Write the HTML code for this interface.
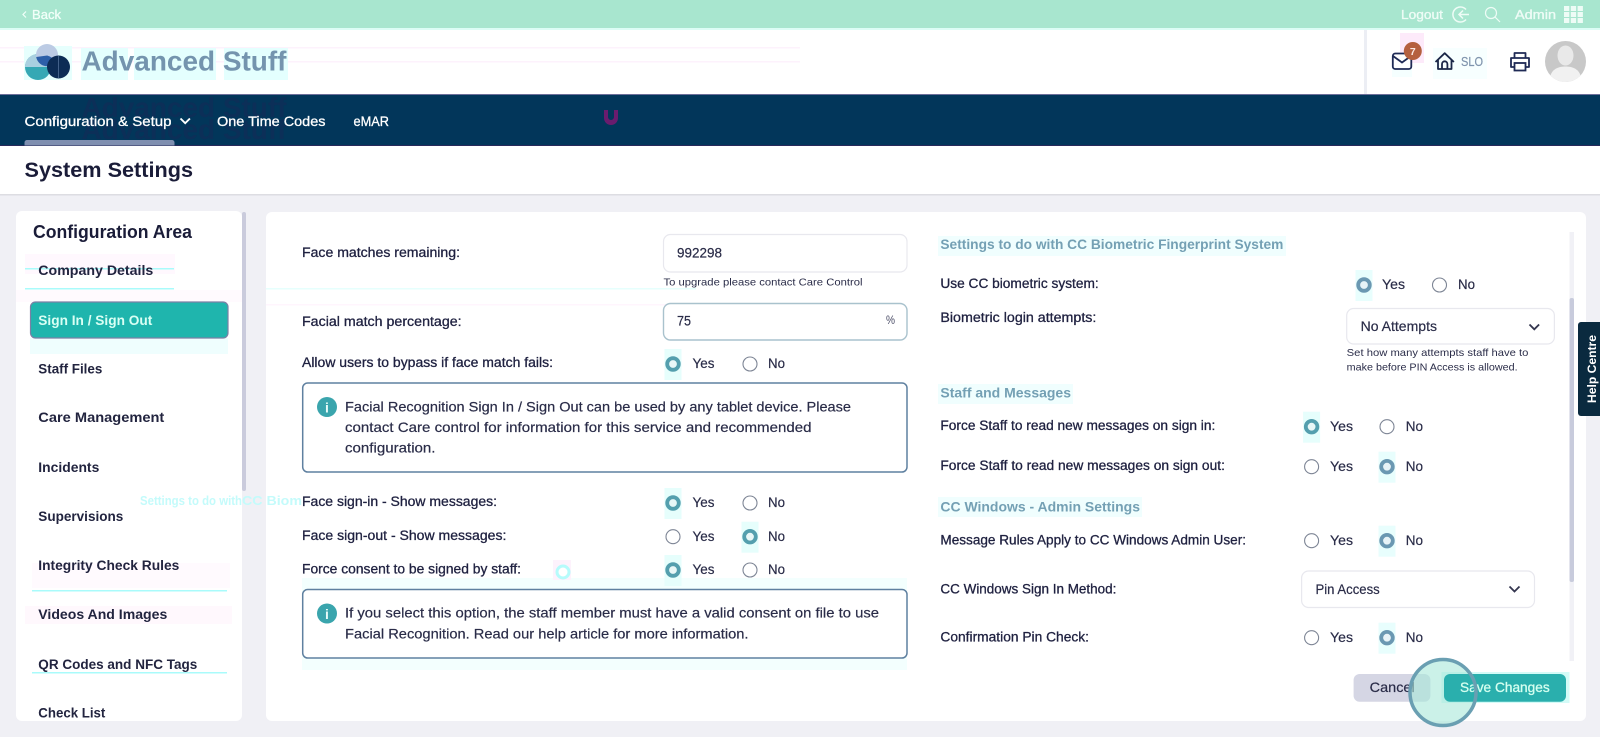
<!DOCTYPE html>
<html lang="en"><head><meta charset="utf-8"><title>System Settings</title>
<style>
html,body{margin:0;padding:0;width:1600px;height:737px;overflow:hidden;background:#f0f0f5}
svg{display:block}
text{font-family:"Liberation Sans",sans-serif;white-space:pre}
.l{font-size:13.5px;fill:#1f2140;stroke:#1f2140;stroke-width:.3}
.r{font-size:14px;fill:#2a2c48;stroke:#2a2c48;stroke-width:.2}
.s{font-size:10.5px;fill:#2a2c48}
.m{font-size:13.5px;font-weight:bold;fill:#22243f}
.h{font-size:14px;font-weight:bold;fill:#74a0b4}
.n{font-size:14px;fill:#fff;stroke:#fff;stroke-width:.3}
.g{fill:#c4fbfb;font-size:13px;font-weight:bold}
</style></head><body>
<svg width="1600" height="737" viewBox="0 0 1600 737" xmlns="http://www.w3.org/2000/svg">
<defs>
<g id="off"><circle r="7" fill="#fff" stroke="#7d8595" stroke-width="1.100"/></g>
<g id="on"><rect x="-8.500" y="-15" width="17" height="31" fill="#e6fefc"/><circle r="5.800" fill="#e8f7f7" stroke="#549fae" stroke-width="3.800"/></g>
<g id="on2"><rect x="-8.500" y="-15" width="17" height="31" fill="#e8fefd"/><circle r="5.800" fill="#e8f3f7" stroke="#6b98b2" stroke-width="3.800"/></g>
</defs>
<rect width="1600" height="737" fill="#f0f0f5"/>

<!-- top bar -->
<rect width="1600" height="28" fill="#a8e6cf"/>
<rect y="28" width="1600" height="2" fill="#dcfdf6"/>
<path d="M26 11.500l-3 3 3 3" fill="none" stroke="#f2fff9" stroke-width="1.200"/>
<text x="32" y="19" font-size="12.500" fill="#f2fff9" stroke="#f2fff9" stroke-width=".3" textLength="29" lengthAdjust="spacingAndGlyphs">Back</text>
<text x="1401" y="19" font-size="13" fill="#eefcf6" stroke="#eefcf6" stroke-width=".35" textLength="42" lengthAdjust="spacingAndGlyphs">Logout</text>
<path d="M1466 9.500a7.500 7.500 0 1 0 0 10" fill="none" stroke="#eefcf6" stroke-width="1.500"/>
<path d="M1469 14.500h-10M1463 10.500l-4 4 4 4" fill="none" stroke="#eefcf6" stroke-width="1.500"/>
<circle cx="1491" cy="13" r="5.500" fill="none" stroke="#eefcf6" stroke-width="1.200"/>
<path d="M1495 17l5 5" stroke="#eefcf6" stroke-width="1.200"/>
<text x="1515" y="19" font-size="13" fill="#eefcf6" stroke="#eefcf6" stroke-width=".35" textLength="41" lengthAdjust="spacingAndGlyphs">Admin</text>
<g fill="#eefcf6">
<rect x="1564" y="6" width="5.300" height="5"/><rect x="1570.800" y="6" width="5.300" height="5"/><rect x="1577.600" y="6" width="5.300" height="5"/>
<rect x="1564" y="12" width="5.300" height="5"/><rect x="1570.800" y="12" width="5.300" height="5"/><rect x="1577.600" y="12" width="5.300" height="5"/>
<rect x="1564" y="18" width="5.300" height="5"/><rect x="1570.800" y="18" width="5.300" height="5"/><rect x="1577.600" y="18" width="5.300" height="5"/>
</g>

<!-- header -->
<rect y="30" width="1600" height="64" fill="#fff"/>
<rect y="47" width="800" height="1.500" fill="#fdf2fc"/><rect y="61" width="800" height="1.500" fill="#fdf2fc"/>
<rect x="24" y="46" width="48" height="34" fill="#e6fffd"/>
<rect x="81" y="48" width="47" height="32" fill="#e4fffe"/><rect x="134" y="48" width="82" height="32" fill="#e4fffe"/><rect x="224" y="48" width="64" height="32" fill="#e4fffe"/>
<circle cx="38" cy="67" r="13" fill="#35a8b4"/>
<path d="M25 67a13 13 0 0 1 26 0z" fill="#a9d0e0"/>
<circle cx="47" cy="55" r="11" fill="#bccbe4"/>
<path d="M36.200 57a11 11 0 0 0 19 5.500 11.500 11.500 0 0 0-8-7z" fill="#2d5fa8"/>
<circle cx="58.500" cy="67" r="11.500" fill="#0d2c55"/>
<rect x="58" y="56" width="1" height="22" fill="#43618a"/>
<text x="81.500" y="70.500" font-size="28" font-weight="bold" fill="#7494ae" textLength="205" lengthAdjust="spacingAndGlyphs">Advanced Stuff</text>
<rect x="1364" y="30" width="3" height="64" fill="#eceef4"/>

<rect x="1400" y="33" width="24" height="30" fill="#fdeafa"/>
<rect x="1392" y="63" width="20" height="14" fill="#f5ffff"/>
<rect x="1392.800" y="53.500" width="18.500" height="15.500" rx="2.500" fill="#fff" stroke="#1f2a55" stroke-width="1.800"/>
<path d="M1393 56l9 6.500 9-6.500" fill="none" stroke="#1f2a55" stroke-width="1.800"/>
<circle cx="1412.800" cy="51" r="9" fill="#b5603f"/>
<text x="1412.800" y="55" font-size="10.500" font-weight="bold" fill="#fbe9e4" text-anchor="middle">7</text>

<rect x="1433" y="48" width="54" height="31" fill="#f7ffff"/>
<path d="M1435.500 62l9.200-8.800 9.200 8.800M1438 60v9h13.500v-9M1442 69v-5a2.700 2.700 0 0 1 5.400 0v5" fill="none" stroke="#1b2748" stroke-width="1.800" stroke-linejoin="round"/>
<text x="1461" y="66" font-size="12.500" fill="#7f94ad" stroke="#7f94ad" stroke-width=".2" textLength="22" lengthAdjust="spacingAndGlyphs">SLO</text>
<path d="M1514.500 58v-5h11v5M1514 67h-3v-9h18v9h-3" fill="none" stroke="#1f2a55" stroke-width="1.800" stroke-linejoin="round"/>
<rect x="1514.500" y="63" width="11" height="7.500" fill="#fff" stroke="#1f2a55" stroke-width="1.800"/>
<circle cx="1565.500" cy="61.500" r="20.500" fill="#c8c8c8"/>
<ellipse cx="1565.500" cy="55.500" rx="8" ry="10" fill="#e9e9e9"/>
<path d="M1550.500 75.500c2-7 9-9 15-9s13 2 15 9a20.500 20.500 0 0 1-30 0z" fill="#f1f1f1"/>

<!-- nav -->
<rect y="94" width="1600" height="51.500" fill="#02365a"/>
<rect y="94" width="1600" height="1" fill="#6e6f9a"/>
<rect y="145" width="1600" height="1" fill="#29295a"/>
<text x="81.500" y="117" font-size="28" font-weight="bold" fill="#0c2f58" textLength="205" lengthAdjust="spacingAndGlyphs">Advanced Stuff</text>
<text x="81.500" y="139" font-size="28" font-weight="bold" fill="#0c2f58" textLength="205" lengthAdjust="spacingAndGlyphs">Advanced Stuff</text>
<path d="M604 110h4v7a3 3 0 0 0 6 0v-7h4v8a7 7 0 0 1-14 0z" fill="#6a1c6e"/>
<text x="24.500" y="126" class="n" textLength="147" lengthAdjust="spacingAndGlyphs">Configuration &amp; Setup</text>
<path d="M180.500 118.500l4.700 4.700 4.700-4.700" fill="none" stroke="#fff" stroke-width="1.900"/>
<text x="217" y="126" class="n" textLength="108.500" lengthAdjust="spacingAndGlyphs">One Time Codes</text>
<text x="353.500" y="126" class="n" textLength="35.500" lengthAdjust="spacingAndGlyphs">eMAR</text>
<path d="M24.500 145.500v-3a2.500 2.500 0 0 1 2.500-2.500h145a2.500 2.500 0 0 1 2.500 2.500v3z" fill="#7f8fb0"/>

<!-- title bar -->
<rect y="146" width="1600" height="48" fill="#fff"/>
<rect y="194" width="1600" height="1.500" fill="#dddde2"/>
<text x="24.500" y="177" font-size="21" font-weight="bold" fill="#1a1c38" textLength="168.500" lengthAdjust="spacingAndGlyphs">System Settings</text>

<!-- sidebar -->
<rect x="16" y="211" width="226" height="510" rx="6" fill="#fff"/>
<rect x="242" y="212" width="4" height="279" rx="2" fill="#cacbdc"/>
<rect x="25" y="254" width="150" height="20" fill="#fff8fe"/>
<rect x="25" y="268" width="149" height="1.500" fill="#a9fbfb"/>
<rect x="25" y="288" width="149" height="1.500" fill="#a9fbfb"/>
<rect x="16" y="290" width="226" height="12" fill="#fffafe"/>
<rect x="30" y="338" width="198" height="16" fill="#effefe"/>
<rect x="32" y="590" width="195" height="1.500" fill="#a9fbfb"/>
<rect x="32" y="563" width="198" height="25" fill="#fffafe"/>
<rect x="25" y="606" width="207" height="18" fill="#fff8fd"/>
<rect x="32" y="672" width="195" height="1.500" fill="#a9fbfb"/>
<text x="33" y="238" font-size="18" font-weight="bold" fill="#1a1c38" textLength="159" lengthAdjust="spacingAndGlyphs">Configuration Area</text>
<text x="38.300" y="275" class="m" textLength="115" lengthAdjust="spacingAndGlyphs">Company Details</text>
<rect x="30.500" y="302" width="197.500" height="36" rx="5" fill="#1fb5ad" stroke="#7a80a5" stroke-width="1.200"/>
<text x="38.300" y="325" class="m" style="fill:#d9fff4" textLength="114" lengthAdjust="spacingAndGlyphs">Sign In / Sign Out</text>
<text x="38.300" y="373.500" class="m" textLength="64" lengthAdjust="spacingAndGlyphs">Staff Files</text>
<text x="38.300" y="422" class="m" textLength="126" lengthAdjust="spacingAndGlyphs">Care Management</text>
<text x="38.300" y="472" class="m" textLength="61" lengthAdjust="spacingAndGlyphs">Incidents</text>
<text x="38.300" y="521" class="m" textLength="85" lengthAdjust="spacingAndGlyphs">Supervisions</text>
<text x="38.300" y="570" class="m" textLength="141" lengthAdjust="spacingAndGlyphs">Integrity Check Rules</text>
<text x="38.300" y="619" class="m" textLength="129" lengthAdjust="spacingAndGlyphs">Videos And Images</text>
<text x="38.300" y="669" class="m" textLength="159" lengthAdjust="spacingAndGlyphs">QR Codes and NFC Tags</text>
<text x="38.300" y="717.500" class="m" textLength="67" lengthAdjust="spacingAndGlyphs">Check List</text>
<text x="140" y="505" class="g" textLength="102" lengthAdjust="spacingAndGlyphs">Settings to do with</text>

<!-- main panel -->
<rect x="266" y="212" width="1320" height="509" rx="6" fill="#fff"/>
<text x="242" y="505" class="g" textLength="60" lengthAdjust="spacingAndGlyphs">CC Biom</text>
<rect x="302" y="578" width="605" height="92" fill="#f3fffe"/>
<rect x="266" y="288" width="430" height="1.500" fill="#e6fffd"/>
<rect x="266" y="304" width="430" height="1.500" fill="#fff5fd"/>

<text x="302" y="257" class="l" textLength="158" lengthAdjust="spacingAndGlyphs">Face matches remaining:</text>
<rect x="663.500" y="234.500" width="243.500" height="37.500" rx="7" fill="#fff" stroke="#e8e8ee" stroke-width="1.200"/>
<text x="677" y="257.500" class="r" textLength="45" lengthAdjust="spacingAndGlyphs">992298</text>
<text x="663.500" y="285.500" class="s" textLength="199" lengthAdjust="spacingAndGlyphs">To upgrade please contact Care Control</text>
<text x="302" y="326" class="l" textLength="159.600" lengthAdjust="spacingAndGlyphs">Facial match percentage:</text>
<rect x="663.500" y="303.500" width="243.500" height="36.500" rx="7" fill="#fff" stroke="#a9c2cd" stroke-width="1.400"/>
<text x="677" y="325.700" class="r" textLength="14" lengthAdjust="spacingAndGlyphs">75</text>
<text x="886" y="324" font-size="12" fill="#4a4c66" textLength="9" lengthAdjust="spacingAndGlyphs">%</text>

<text x="302" y="367" class="l" textLength="251" lengthAdjust="spacingAndGlyphs">Allow users to bypass if face match fails:</text>
<use href="#on" x="673" y="364"/><text x="692.500" y="368" class="r" textLength="22" lengthAdjust="spacingAndGlyphs">Yes</text>
<use href="#off" x="750" y="364"/><text x="768" y="368" class="r" textLength="17" lengthAdjust="spacingAndGlyphs">No</text>

<rect x="302.700" y="383" width="604.300" height="89" rx="5" fill="#fff" stroke="#5f80a0" stroke-width="1.500"/>
<circle cx="327" cy="407" r="10" fill="#3aa5ad"/>
<text x="327" y="412.500" font-size="14" font-weight="bold" fill="#e7fbf8" text-anchor="middle">i</text>
<text x="345" y="411.700" class="r" textLength="506" lengthAdjust="spacingAndGlyphs">Facial Recognition Sign In / Sign Out can be used by any tablet device. Please</text>
<text x="345" y="432" class="r" textLength="466.500" lengthAdjust="spacingAndGlyphs">contact Care control for information for this service and recommended</text>
<text x="345" y="452.700" class="r" textLength="90.500" lengthAdjust="spacingAndGlyphs">configuration.</text>

<text x="302" y="506" class="l" textLength="195" lengthAdjust="spacingAndGlyphs">Face sign-in - Show messages:</text>
<use href="#on" x="673" y="503"/><text x="692.500" y="507" class="r" textLength="22" lengthAdjust="spacingAndGlyphs">Yes</text>
<use href="#off" x="750" y="503"/><text x="768" y="507" class="r" textLength="17" lengthAdjust="spacingAndGlyphs">No</text>

<text x="302" y="540" class="l" textLength="204.400" lengthAdjust="spacingAndGlyphs">Face sign-out - Show messages:</text>
<use href="#off" x="673" y="536.700"/><text x="692.500" y="541" class="r" textLength="22" lengthAdjust="spacingAndGlyphs">Yes</text>
<use href="#on" x="750" y="536.700"/><text x="768" y="541" class="r" textLength="17" lengthAdjust="spacingAndGlyphs">No</text>

<text x="302" y="573.700" class="l" textLength="219" lengthAdjust="spacingAndGlyphs">Force consent to be signed by staff:</text>
<rect x="553" y="560" width="18" height="20" fill="#fdf2fc"/>
<circle cx="563" cy="572" r="6" fill="#fff" stroke="#b6fbfb" stroke-width="3"/>
<use href="#on" x="673" y="570"/><text x="692.500" y="574" class="r" textLength="22" lengthAdjust="spacingAndGlyphs">Yes</text>
<use href="#off" x="750" y="570"/><text x="768" y="574" class="r" textLength="17" lengthAdjust="spacingAndGlyphs">No</text>

<rect x="302.700" y="589.500" width="604.300" height="68.500" rx="5" fill="#fff" stroke="#5f80a0" stroke-width="1.500"/>
<circle cx="327" cy="613.500" r="10" fill="#3aa5ad"/>
<text x="327" y="619" font-size="14" font-weight="bold" fill="#e7fbf8" text-anchor="middle">i</text>
<text x="345" y="617.700" class="r" textLength="534" lengthAdjust="spacingAndGlyphs">If you select this option, the staff member must have a valid consent on file to use</text>
<text x="345" y="638.700" class="r" textLength="403.500" lengthAdjust="spacingAndGlyphs">Facial Recognition. Read our help article for more information.</text>

<!-- right column -->
<rect x="938" y="236" width="348" height="20" fill="#f0fefe"/>
<text x="940.400" y="249" class="h" textLength="343" lengthAdjust="spacingAndGlyphs">Settings to do with CC Biometric Fingerprint System</text>
<text x="940.400" y="288" class="l" textLength="158.300" lengthAdjust="spacingAndGlyphs">Use CC biometric system:</text>
<use href="#on2" x="1364" y="285"/><text x="1382" y="289" class="r" textLength="23" lengthAdjust="spacingAndGlyphs">Yes</text>
<use href="#off" x="1439.500" y="285"/><text x="1458" y="289" class="r" textLength="17" lengthAdjust="spacingAndGlyphs">No</text>
<text x="940.400" y="322" class="l" textLength="156" lengthAdjust="spacingAndGlyphs">Biometric login attempts:</text>
<rect x="1346.700" y="308.500" width="207.700" height="35.500" rx="7" fill="#fff" stroke="#e8e8ee" stroke-width="1.200"/>
<text x="1360.600" y="331" class="r" textLength="76.400" lengthAdjust="spacingAndGlyphs">No Attempts</text>
<path d="M1529.500 324.500l4.800 4.800 4.800-4.800" fill="none" stroke="#34364f" stroke-width="1.800"/>
<text x="1346.700" y="356" class="s" textLength="181.700" lengthAdjust="spacingAndGlyphs">Set how many attempts staff have to</text>
<text x="1346.700" y="370.700" class="s" textLength="170.900" lengthAdjust="spacingAndGlyphs">make before PIN Access is allowed.</text>

<rect x="938" y="384" width="135" height="20" fill="#f0fefe"/>
<text x="940.400" y="397.500" class="h" textLength="130.600" lengthAdjust="spacingAndGlyphs">Staff and Messages</text>
<text x="940.400" y="430" class="l" textLength="274.900" lengthAdjust="spacingAndGlyphs">Force Staff to read new messages on sign in:</text>
<use href="#on" x="1311.600" y="426.700"/><text x="1330" y="431" class="r" textLength="23" lengthAdjust="spacingAndGlyphs">Yes</text>
<use href="#off" x="1387" y="426.700"/><text x="1405.700" y="431" class="r" textLength="17.300" lengthAdjust="spacingAndGlyphs">No</text>
<text x="940.400" y="470" class="l" textLength="284.500" lengthAdjust="spacingAndGlyphs">Force Staff to read new messages on sign out:</text>
<use href="#off" x="1311.600" y="466.700"/><text x="1330" y="471" class="r" textLength="23" lengthAdjust="spacingAndGlyphs">Yes</text>
<use href="#on2" x="1387" y="466.700"/><text x="1405.700" y="471" class="r" textLength="17.300" lengthAdjust="spacingAndGlyphs">No</text>

<rect x="938" y="497" width="204" height="20" fill="#f0fefe"/>
<text x="940.400" y="511.500" class="h" textLength="199.600" lengthAdjust="spacingAndGlyphs">CC Windows - Admin Settings</text>
<text x="940.400" y="544.500" class="l" textLength="305.600" lengthAdjust="spacingAndGlyphs">Message Rules Apply to CC Windows Admin User:</text>
<use href="#off" x="1311.600" y="540.700"/><text x="1330" y="545" class="r" textLength="23" lengthAdjust="spacingAndGlyphs">Yes</text>
<use href="#on2" x="1387" y="540.700"/><text x="1405.700" y="545" class="r" textLength="17.300" lengthAdjust="spacingAndGlyphs">No</text>
<text x="940.400" y="593.500" class="l" textLength="176" lengthAdjust="spacingAndGlyphs">CC Windows Sign In Method:</text>
<rect x="1301.600" y="571" width="232.900" height="36.500" rx="7" fill="#fff" stroke="#e8e8ee" stroke-width="1.200"/>
<text x="1315.500" y="594" class="r" textLength="64.200" lengthAdjust="spacingAndGlyphs">Pin Access</text>
<path d="M1509.500 586.500l5 5 5-5" fill="none" stroke="#34364f" stroke-width="1.800"/>
<text x="940.400" y="641.500" class="l" textLength="148.600" lengthAdjust="spacingAndGlyphs">Confirmation Pin Check:</text>
<use href="#off" x="1311.600" y="637.700"/><text x="1330" y="642" class="r" textLength="23" lengthAdjust="spacingAndGlyphs">Yes</text>
<use href="#on2" x="1387" y="637.700"/><text x="1405.700" y="642" class="r" textLength="17.300" lengthAdjust="spacingAndGlyphs">No</text>

<!-- scrollbar -->
<rect x="1569.500" y="232" width="4.500" height="429" fill="#f1f1f6"/>
<rect x="1569.500" y="298" width="4.500" height="284" rx="2" fill="#c8cbdc"/>

<!-- buttons: circle fill sits beneath the save button, ring on top -->
<rect x="1353.600" y="674" width="76.800" height="27.700" rx="6" fill="#d5d6e4"/>
<text x="1369.700" y="692" class="r" textLength="45" lengthAdjust="spacingAndGlyphs">Cancel</text>
<rect x="1441.500" y="672" width="128" height="31" fill="#d4fbf7"/>
<circle cx="1443" cy="692.500" r="33" fill="#a9e8d8" fill-opacity=".6"/>
<rect x="1444" y="674" width="122" height="27.700" rx="6" fill="#2aafad"/>
<text x="1460" y="692" class="n" style="fill:#d5fff0;stroke:#d5fff0" textLength="89.700" lengthAdjust="spacingAndGlyphs">Save Changes</text>
<circle cx="1443" cy="692.500" r="33" fill="none" stroke="#6a9fb2" stroke-width="3.500"/>

<!-- help -->
<path d="M1600 322h-19a3 3 0 0 0-3 3v88a3 3 0 0 0 3 3h19z" fill="#0a2a3f"/>
<text transform="translate(1596,403) rotate(-90)" font-size="11.500" font-weight="bold" fill="#fff" textLength="68" lengthAdjust="spacingAndGlyphs">Help Centre</text>
</svg>
</body></html>
